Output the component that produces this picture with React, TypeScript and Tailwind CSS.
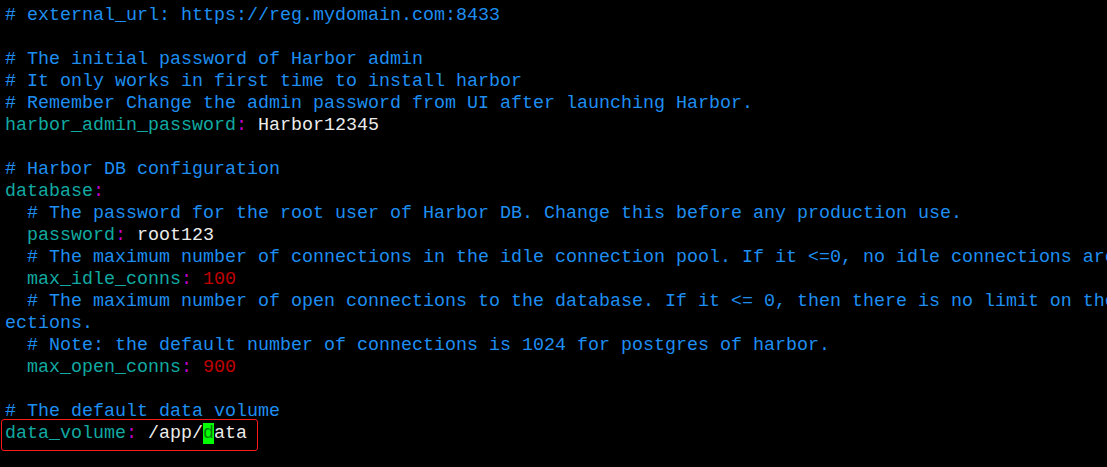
import React from "react";

type Seg = { t: string; c: string };

const C = {
  comment: "text-[#1e8ef0]",
  key: "text-[#11aaa2]",
  colon: "text-[#c000c8]",
  value: "text-[#ececec]",
  num: "text-[#c00000]",
};

const cm = (t: string): Seg[] => [{ t, c: C.comment }];
const kv = (indent: string, k: string, v: string, vc = C.value): Seg[] => [
  { t: indent, c: C.value },
  { t: k, c: C.key },
  { t: ":", c: C.colon },
  { t: " " + v, c: vc },
];

const lines: Seg[][] = [
  cm("# external_url: https://reg.mydomain.com:8433"),
  [],
  cm("# The initial password of Harbor admin"),
  cm("# It only works in first time to install harbor"),
  cm("# Remember Change the admin password from UI after launching Harbor."),
  kv("", "harbor_admin_password", "Harbor12345"),
  [],
  cm("# Harbor DB configuration"),
  [
    { t: "database", c: C.key },
    { t: ":", c: C.colon },
  ],
  cm("  # The password for the root user of Harbor DB. Change this before any production use."),
  kv("  ", "password", "root123"),
  cm("  # The maximum number of connections in the idle connection pool. If it <=0, no idle connections are"),
  kv("  ", "max_idle_conns", "100", C.num),
  cm("  # The maximum number of open connections to the database. If it <= 0, then there is no limit on the"),
  cm("ections."),
  cm("  # Note: the default number of connections is 1024 for postgres of harbor."),
  kv("  ", "max_open_conns", "900", C.num),
  [],
  cm("# The default data volume"),
];

export default function App() {
  return (
    <div className="w-[1107px] h-[467px] bg-black overflow-hidden pt-[5px] pl-[5px] font-['Liberation_Mono','Courier_New',monospace] text-[18.33px] leading-[22px]">
      {lines.map((segs, i) => (
        <div key={i} className="h-[22px] whitespace-pre">
          {segs.map((s, j) => (
            <span key={j} className={s.c}>
              {s.t}
            </span>
          ))}
        </div>
      ))}
      {/* last line, boxed in red, with the cursor on "d" */}
      <div className="relative h-[22px] whitespace-pre">
        <span className={C.key}>data_volume</span>
        <span className={C.colon}>:</span>
        <span className={C.value}> /app/</span>
        <span className="bg-[#00ff00] text-[#0a7a0a]">d</span>
        <span className={C.value}>ata</span>
        <div className="absolute left-[-4px] top-[-4px] w-[257px] h-[32px] border border-[#ff1a1a] rounded-[3px]" />
      </div>
    </div>
  );
}
